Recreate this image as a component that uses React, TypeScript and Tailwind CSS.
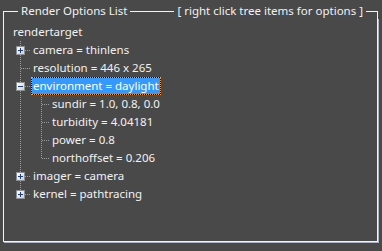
import React from "react";

type Node = {
  label: string;
  level: 0 | 1 | 2;
  box?: "plus" | "minus";
  selected?: boolean;
  last?: boolean;
};

const rows: Node[] = [
  { label: "rendertarget", level: 0 },
  { label: "camera = thinlens", level: 1, box: "plus" },
  { label: "resolution = 446 x 265", level: 1 },
  { label: "environment = daylight", level: 1, box: "minus", selected: true },
  { label: "sundir = 1.0, 0.8, 0.0", level: 2 },
  { label: "turbidity = 4.04181", level: 2 },
  { label: "power = 0.8", level: 2 },
  { label: "northoffset = 0.206", level: 2, last: true },
  { label: "imager = camera", level: 1, box: "plus" },
  { label: "kernel = pathtracing", level: 1, box: "plus", last: true },
];

const DOT = "#9c9c9c";

function VLine({ x, y1, y2 }: { x: number; y1: number; y2: number }) {
  return <line x1={x + 0.5} x2={x + 0.5} y1={y1} y2={y2} stroke={DOT} strokeDasharray="1 1" />;
}

function HLine({ y, x1, x2 }: { y: number; x1: number; x2: number }) {
  return <line x1={x1} x2={x2} y1={y + 0.5} y2={y + 0.5} stroke={DOT} strokeDasharray="1 1" />;
}

function Expander({ x, y, kind }: { x: number; y: number; kind: "plus" | "minus" }) {
  return (
    <g shapeRendering="crispEdges">
      <defs>
        <linearGradient id="exp" x1="0" y1="0" x2="1" y2="1">
          <stop offset="0" stopColor="#ffffff" />
          <stop offset="1" stopColor="#cfcfcf" />
        </linearGradient>
      </defs>
      <rect x={x + 0.5} y={y + 0.5} width={8} height={8} fill="url(#exp)" stroke="#8e8f8f" />
      <rect x={x + 2} y={y + 4} width={5} height={1} fill="#1c3f8c" />
      {kind === "plus" && <rect x={x + 4} y={y + 2} width={1} height={5} fill="#1c3f8c" />}
    </g>
  );
}

function Guides({ node }: { node: Node }) {
  if (node.level === 0) return <div className="w-[7px] shrink-0" />;
  const w = node.level === 1 ? 27 : 46;
  // svg starts at page x 4; level-1 line sits at page x 20, level-2 at page x 41
  return (
    <svg width={w} height={18} className="shrink-0" shapeRendering="crispEdges">
      {node.level === 1 && (
        <>
          <VLine x={16} y1={0} y2={node.last ? 9 : 18} />
          <HLine y={9} x1={17} x2={27} />
          {node.box && <Expander x={12} y={5} kind={node.box} />}
        </>
      )}
      {node.level === 2 && (
        <>
          <VLine x={16} y1={0} y2={18} />
          <VLine x={37} y1={0} y2={node.last ? 9 : 18} />
          <HLine y={9} x1={38} x2={46} />
        </>
      )}
    </svg>
  );
}

export default function App() {
  return (
    <div
      className="w-[382px] h-[251px] bg-[#494949] pt-[4px] pl-[3px] text-[11.5px] leading-[18px] text-[#f2f2f2]"
      style={{ fontFamily: '"Noto Sans", "DejaVu Sans", sans-serif' }}
    >
      <div className="w-[375px] h-[238px] flex flex-col">
        <div className="flex items-center h-[14px]">
          <div className="w-[15px] h-[7px] self-end border-t border-l border-[#f4f4f4]" />
          <span className="px-[3px] leading-[14px] whitespace-nowrap">Render Options List</span>
          <div className="flex-1 h-px bg-[#f4f4f4]" />
          <span className="px-[3px] leading-[14px] whitespace-nowrap">[ right click tree items for options ]</span>
          <div className="w-[12px] h-[7px] self-end border-t border-r border-[#f4f4f4]" />
        </div>
        <div className="flex-1 border-l border-r border-b border-[#f4f4f4] shadow-[1px_1px_0_#aeb4c4] pt-[5px]">
          {rows.map((n) => (
            <div key={n.label} className="flex h-[18px] items-stretch">
              <Guides node={n} />
              {n.selected ? (
                <span className="border border-dotted border-[#ff9a2e] bg-black">
                  <span className="block bg-[#3399ff] px-px leading-[16px] text-white whitespace-nowrap">{n.label}</span>
                </span>
              ) : (
                <span className="px-[2px] whitespace-nowrap">{n.label}</span>
              )}
            </div>
          ))}
        </div>
      </div>
    </div>
  );
}
